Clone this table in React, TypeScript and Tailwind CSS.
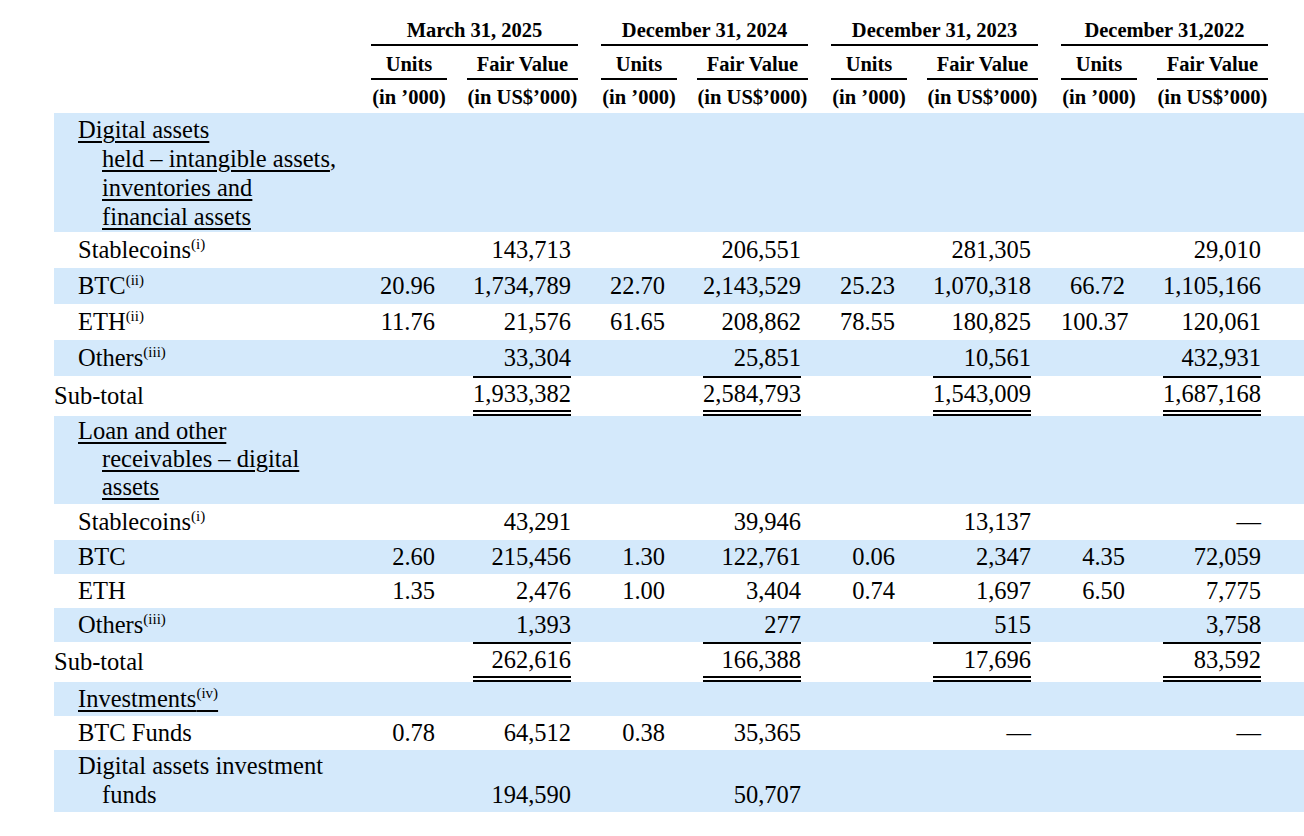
import type { ReactNode } from "react";

const periods = ["March 31, 2025", "December 31, 2024", "December 31, 2023", "December 31,2022"];

type V = [string, string];

function Sup({ children }: { children: ReactNode }) {
  return <sup className="text-[15px] -top-[9px]">{children}</sup>;
}

function U({ children }: { children: ReactNode }) {
  return <span className="underline decoration-[1.5px] underline-offset-[3px]">{children}</span>;
}

function ItemRow({ label, vals, shaded, h }: { label: ReactNode; vals: V[]; shaded?: boolean; h: string }) {
  return (
    <div className={`flex items-center ${h} ${shaded ? "bg-[#d4e9fb]" : ""}`}>
      <div className="w-[317px] whitespace-nowrap pl-[24px]">{label}</div>
      {vals.map(([u, f], i) => (
        <div key={i} className={`flex w-[207px] ${i > 0 ? "ml-[23px]" : ""}`}>
          <div className="w-[76px] pr-[12px] text-right">{u}</div>
          <div className="ml-[20px] w-[111px] pl-[6px] pr-[7px] text-right">{f}</div>
        </div>
      ))}
    </div>
  );
}

function SubtotalRow({ vals }: { vals: string[] }) {
  return (
    <div className="flex h-[40px]">
      <div className="w-[317px] leading-[36px] pt-[2px]">Sub-total</div>
      {vals.map((f, i) => (
        <div key={i} className={`flex w-[207px] ${i > 0 ? "ml-[23px]" : ""}`}>
          <div className="w-[76px]" />
          <div className="ml-[20px] w-[111px] pl-[6px] pr-[7px]">
            <div className="border-t-2 border-black">
              <div className="border-b-[6px] border-double border-black text-right leading-[32px]">{f}</div>
            </div>
          </div>
        </div>
      ))}
    </div>
  );
}

function HeadRow({ lines, cls }: { lines: ReactNode[]; cls: string }) {
  return (
    <div className={`flex bg-[#d4e9fb] ${cls}`}>
      <div className="w-[317px] pl-[24px] whitespace-nowrap">
        {lines.map((l, i) => (
          <div key={i} className={i > 0 ? "pl-[24px]" : ""}>
            {l}
          </div>
        ))}
      </div>
    </div>
  );
}

export default function App() {
  return (
    <div className="min-h-screen bg-white text-black font-['Liberation_Serif','Times_New_Roman',serif]">
      <div className="pl-[54px] pt-[16px]">
        {/* column headings */}
        <div className="text-[20.5px] font-bold">
          <div className="flex">
            <div className="w-[317px]" />
            {periods.map((p, i) => (
              <div key={p} className={`w-[207px] border-b-2 border-black text-center leading-[28px] ${i > 0 ? "ml-[23px]" : ""}`}>
                {p}
              </div>
            ))}
          </div>
          <div className="flex pt-[4px]">
            <div className="w-[317px]" />
            {periods.map((p, i) => (
              <div key={p} className={`flex w-[207px] ${i > 0 ? "ml-[23px]" : ""}`}>
                <div className="w-[76px] border-b-2 border-black text-center leading-[28px]">Units</div>
                <div className="ml-[20px] w-[111px] border-b-2 border-black text-center leading-[28px]">Fair Value</div>
              </div>
            ))}
          </div>
          <div className="flex pt-[3px] pb-[2px]">
            <div className="w-[317px]" />
            {periods.map((p, i) => (
              <div key={p} className={`flex w-[207px] whitespace-nowrap ${i > 0 ? "ml-[23px]" : ""}`}>
                <div className="w-[76px] text-center leading-[28px]">(in ’000)</div>
                <div className="ml-[20px] w-[111px] text-center leading-[28px]">(in US$’000)</div>
              </div>
            ))}
          </div>
        </div>

        {/* body */}
        <div className="text-[24.5px]">
          <HeadRow
            cls="leading-[29px] pt-[2px] pb-[1px]"
            lines={[
              <U>Digital assets</U>,
              <>
                <U>held – intangible assets</U>,
              </>,
              <U>inventories and</U>,
              <U>financial assets</U>,
            ]}
          />
          <ItemRow h="h-[36px]" label={<>Stablecoins<Sup>(i)</Sup></>} vals={[["", "143,713"], ["", "206,551"], ["", "281,305"], ["", "29,010"]]} />
          <ItemRow
            h="h-[36px]"
            shaded
            label={<>BTC<Sup>(ii)</Sup></>}
            vals={[["20.96", "1,734,789"], ["22.70", "2,143,529"], ["25.23", "1,070,318"], ["66.72", "1,105,166"]]}
          />
          <ItemRow
            h="h-[36px]"
            label={<>ETH<Sup>(ii)</Sup></>}
            vals={[["11.76", "21,576"], ["61.65", "208,862"], ["78.55", "180,825"], ["100.37", "120,061"]]}
          />
          <ItemRow h="h-[36px]" shaded label={<>Others<Sup>(iii)</Sup></>} vals={[["", "33,304"], ["", "25,851"], ["", "10,561"], ["", "432,931"]]} />
          <SubtotalRow vals={["1,933,382", "2,584,793", "1,543,009", "1,687,168"]} />

          <HeadRow
            cls="leading-[28px] pt-[1px] pb-[3px]"
            lines={[<U>Loan and other</U>, <U>receivables – digital</U>, <U>assets</U>]}
          />
          <ItemRow h="h-[36px]" label={<>Stablecoins<Sup>(i)</Sup></>} vals={[["", "43,291"], ["", "39,946"], ["", "13,137"], ["", "—"]]} />
          <ItemRow h="h-[34px]" shaded label="BTC" vals={[["2.60", "215,456"], ["1.30", "122,761"], ["0.06", "2,347"], ["4.35", "72,059"]]} />
          <ItemRow h="h-[34px]" label="ETH" vals={[["1.35", "2,476"], ["1.00", "3,404"], ["0.74", "1,697"], ["6.50", "7,775"]]} />
          <ItemRow h="h-[34px]" shaded label={<>Others<Sup>(iii)</Sup></>} vals={[["", "1,393"], ["", "277"], ["", "515"], ["", "3,758"]]} />
          <SubtotalRow vals={["262,616", "166,388", "17,696", "83,592"]} />

          <ItemRow h="h-[34px]" shaded label={<U>Investments<Sup>(iv)</Sup></U>} vals={[["", ""], ["", ""], ["", ""], ["", ""]]} />
          <ItemRow h="h-[34px]" label="BTC Funds" vals={[["0.78", "64,512"], ["0.38", "35,365"], ["", "—"], ["", "—"]]} />
          <div className="flex bg-[#d4e9fb] leading-[29px] pt-[1px] pb-[3px]">
            <div className="w-[317px] pl-[24px] whitespace-nowrap">
              <div>Digital assets investment</div>
              <div className="pl-[24px]">funds</div>
            </div>
            {[["", "194,590"], ["", "50,707"], ["", ""], ["", ""]].map(([u, f], i) => (
              <div key={i} className={`flex w-[207px] items-end ${i > 0 ? "ml-[23px]" : ""}`}>
                <div className="w-[76px] pr-[12px] text-right">{u}</div>
                <div className="ml-[20px] w-[111px] pl-[6px] pr-[7px] text-right">{f}</div>
              </div>
            ))}
          </div>
        </div>
      </div>
    </div>
  );
}
